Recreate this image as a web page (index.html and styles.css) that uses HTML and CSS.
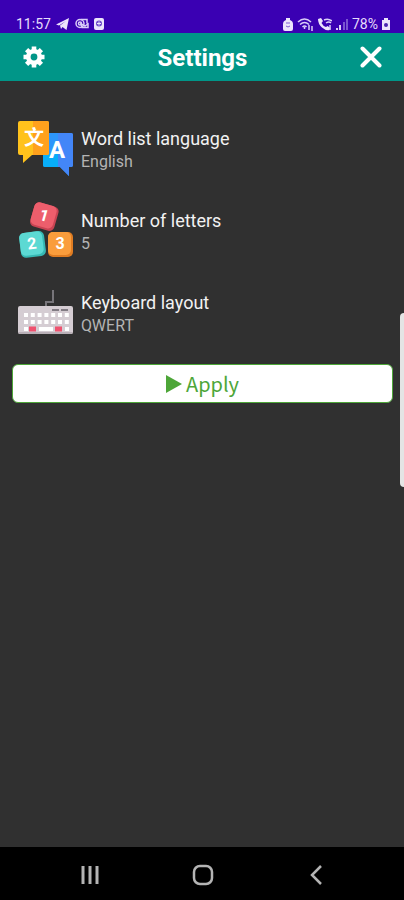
FILE: index.html
```
<!DOCTYPE html>
<html lang="en">
<head>
<meta charset="utf-8">
<meta name="viewport" content="width=device-width, initial-scale=1">
<title>Settings</title>
<link rel="stylesheet" href="styles.css">
</head>
<body>
<div class="status">
  <div class="status-group">
    <span class="status-text">11:57</span>
    <svg width="14" height="12" viewBox="0 0 14 12" fill="#ece4fc"><path d="M0 6.500 13 0 10.500 12 6.500 9 5 11 4 7.500 10 3 3 7.500Z"/></svg>
    <svg width="14" height="12" viewBox="0 0 14 12" fill="none" stroke="#d9cdf8" stroke-width="1.500"><circle cx="5" cy="5.500" r="4"/><circle cx="5" cy="5.500" r="1.500"/><path d="M6 1.500h6v4M7 9.500h6V6L10 8 6 6z"/></svg>
    <svg width="10" height="12" viewBox="0 0 10 12"><rect width="10" height="12" rx="2" fill="#ece4fc"/><circle cx="5" cy="5.500" r="3" fill="#6d49c9"/><path d="M5 3.500v4M3 5.500h4" stroke="#ece4fc"/></svg>
  </div>
  <div class="status-group status-right">
    <svg width="10" height="13" viewBox="0 0 10 13"><path d="M3 0h4v2q3 1 3 4v5q0 2-2 2H2q-2 0-2-2V6q0-3 3-4z" fill="#ece4fc"/><path d="M3 5h4M3 8q2 2 4 0" stroke="#7c5ad0" fill="none"/></svg>
    <svg width="17" height="13" viewBox="0 0 17 13" fill="none" stroke="#d9cdf8" stroke-width="1.500"><path d="M1 4q6.500-6 13 0M3 6.500q4.500-4 9 0M5.500 9q2-2 4 0"/><path d="M7.500 9v2M12 7v5M15 8v5" /></svg>
    <svg width="14" height="13" viewBox="0 0 14 13"><path d="M0 1l3-1 2 3-1.500 2Q5 8 8 9l1.500-1 3 2-1 2Q8 13 4 9.500T0 1Z" fill="#ece4fc"/><path d="M6 2q4-2 8 1M8 5q3-2 5 0M12 7v5" stroke="#d9cdf8" stroke-width="1.500" fill="none"/></svg>
    <svg width="12" height="12" viewBox="0 0 12 12"><path d="M1 10v2M4 7v5" stroke="#d9cdf8" stroke-width="2"/><path d="M8 4v8M11 1v11" stroke="#7955d0" stroke-width="2"/></svg>
    <span class="status-text">78%</span>
    <svg width="8" height="12" viewBox="0 0 8 12"><path d="M2 0h4v2h2v10H0V2h2z" fill="#ece4fc"/><circle cx="4" cy="7" r="2" fill="#4b25ae"/></svg>
  </div>
</div>
<header class="bar">
  <button class="icon-button" aria-label="Preferences">
    <svg width="22" height="22" viewBox="0 0 22 22"><circle cx="11" cy="11" r="5.700" fill="none" stroke="#fff" stroke-width="4.600"/><g stroke="#fff" stroke-width="4.600"><path d="M11 .5v4M11 17.500v4M.5 11h4M17.500 11h4M3.600 3.600l2.800 2.800M15.600 15.600l2.800 2.800M3.600 18.400l2.800-2.800M15.600 6.400l2.800-2.800"/></g></svg>
  </button>
  <h1 class="title">Settings</h1>
  <button class="icon-button" aria-label="Close">
    <svg width="22" height="22" viewBox="0 0 22 22"><path d="M2.500 2.500l17 17M19.500 2.500l-17 17" stroke="#fff" stroke-width="4" stroke-linecap="round"/></svg>
  </button>
</header>
<main class="content">
  <button class="row">
    <svg width="56" height="56" viewBox="0 0 56 56">
      <path d="M27 13h26q2 0 2 2v30q0 2-2 2h-2v9l-9-9H27q-2 0-2-2V15q0-2 2-2z" fill="#2d96fb"/>
      <path d="M25 34h15v13H27q-2 0-2-2z" fill="#08aef9"/>
      <path d="M40 13h13q2 0 2 2v30q0 2-2 2h-2v9l-9-9h-2z" fill="#4386f8"/>
      <path d="M2 1h27q2 0 2 2v30q0 2-2 2H14l-9 8v-8H2q-2 0-2-2V3q0-2 2-2z" fill="#ffc21c"/>
      <path d="M15 1h14q2 0 2 2v30q0 2-2 2H15z" fill="#ffa11d"/>
      <text x="16" y="25" class="glyph han">文</text>
      <text x="39" y="38" class="glyph latin">A</text>
    </svg>
    <span class="row-text"><span class="label">Word list language</span><span class="value">English</span></span>
  </button>
  <button class="row">
    <svg width="56" height="56" viewBox="0 0 56 56">
      <g transform="rotate(16 26 14)"><rect x="14" y="2" width="25" height="25" rx="5" fill="#c84453"/><rect x="14" y="2" width="23" height="23" rx="5" fill="#ed5e6c"/><text x="26" y="19" class="glyph digit">1</text></g>
      <g transform="rotate(-7 14 42)"><rect x="2" y="30" width="25" height="25" rx="5" fill="#36b8b3"/><rect x="2" y="30" width="23" height="23" rx="5" fill="#5cd9d3"/><text x="14" y="47" class="glyph digit">2</text></g>
      <rect x="30" y="30" width="25" height="25" rx="5" fill="#df7c22"/><rect x="30" y="30" width="23" height="23" rx="5" fill="#fa9d3c"/><text x="42" y="47" class="glyph digit">3</text>
    </svg>
    <span class="row-text"><span class="label">Number of letters</span><span class="value">5</span></span>
  </button>
  <button class="row">
    <svg width="56" height="56" viewBox="0 0 56 56">
      <path d="M28 24v-6h7V6" fill="none" stroke="#77757a" stroke-width="2"/>
      <rect y="22" width="55" height="28" rx="2" fill="#d5cdd3"/>
      <path d="M0 48h55q0 2-2 2H2q-2 0-2-2z" fill="#b9b0b7"/>
      <path d="M34 26h7M43 26h7" stroke="#65606a" stroke-width="1.500"/>
      <path d="M6 31h45M6 38h45" stroke="#fff" stroke-width="4" stroke-dasharray="4 2.800"/>
      <path d="M6 45h4M21 45h14M47 45h4" stroke="#fff" stroke-width="4"/>
      <path d="M11 45h7M37 45h7" stroke="#ef526f" stroke-width="5"/>
    </svg>
    <span class="row-text"><span class="label">Keyboard layout</span><span class="value">QWERT</span></span>
  </button>
  <button class="apply"><svg width="16" height="18" viewBox="0 0 16 18"><path d="M0 0l16 9-16 9z" fill="#4da638"/></svg>Apply</button>
</main>
<div class="edge-handle"></div>
<nav class="nav">
  <button class="nav-button" aria-label="Recent apps"><svg width="22" height="22" viewBox="0 0 22 22"><path d="M4 2v18M11 2v18M18 2v18" stroke="#b4b4b4" stroke-width="3"/></svg></button>
  <button class="nav-button" aria-label="Home"><svg width="22" height="22" viewBox="0 0 22 22"><rect x="2" y="2" width="18" height="18" rx="6" fill="none" stroke="#b4b4b4" stroke-width="2.500"/></svg></button>
  <button class="nav-button" aria-label="Back"><svg width="22" height="22" viewBox="0 0 22 22"><path d="M16 2l-9 9 9 9" fill="none" stroke="#b4b4b4" stroke-width="2.500"/></svg></button>
</nav>
</body>
</html>
```
FILE: styles.css
```
* { box-sizing: border-box; }
body {
  margin: 0;
  min-height: 100vh;
  display: flex;
  flex-direction: column;
  background: #303030;
  color: #fff;
  font-family: Roboto, sans-serif;
}
button {
  margin: 0;
  padding: 0;
  border: 0;
  background: none;
  color: inherit;
  font: inherit;
  cursor: pointer;
}
svg { display: block; flex: none; }
.status {
  display: flex;
  justify-content: space-between;
  padding: 16px 14px 1px 16px;
  background: #3a00b3;
  color: #e6dcfb;
}
.status-group { display: flex; align-items: center; gap: 5px; }
.status-right { gap: 4px; }
.status-text { font-size: 14px; line-height: 16px; }
.bar {
  display: flex;
  align-items: center;
  justify-content: space-between;
  height: 48px;
  padding: 0 17px 0 18px;
  background: #009688;
}
.icon-button { display: grid; place-items: center; width: 32px; height: 40px; }
.title { margin: 0; padding-top: 2px; font-size: 24px; line-height: 32px; font-weight: 700; }
.content {
  flex: 1;
  display: flex;
  flex-direction: column;
  padding: 26px 11px 0 12px;
}
.row {
  display: flex;
  align-items: center;
  gap: 7px;
  height: 82px;
  padding: 0 6px;
  text-align: left;
}
.row-text { display: flex; flex-direction: column; gap: 1px; padding-top: 4px; }
.label { font-size: 18px; line-height: 23px; color: #f2f2f2; }
.value { font-size: 16px; line-height: 22px; color: #b4b4b4; }
.glyph { fill: #fff; text-anchor: middle; font-weight: 700; }
.han { font-family: "Noto Sans CJK SC", sans-serif; font-size: 20px; }
.latin { font-family: Roboto, sans-serif; font-size: 24px; }
.digit { font-family: Roboto, sans-serif; font-size: 16px; }
.apply {
  display: flex;
  align-items: center;
  justify-content: center;
  gap: 4px;
  height: 39px;
  margin-top: 11px;
  border: 1px solid #4da638;
  border-radius: 6px;
  background: #fff;
  color: #4da638;
  font-family: "Noto Sans CJK SC", "Noto Sans", sans-serif;
  font-size: 20px;
}
.edge-handle {
  position: absolute;
  top: 313px;
  right: 0;
  width: 4px;
  height: 174px;
  border-radius: 4px 0 0 4px;
  background: #e4e4e4;
}
.nav {
  display: flex;
  justify-content: space-around;
  align-items: center;
  height: 53px;
  padding: 2px 32px 0 34px;
  background: #000;
}
.nav-button { display: grid; place-items: center; width: 48px; height: 48px; }
```
